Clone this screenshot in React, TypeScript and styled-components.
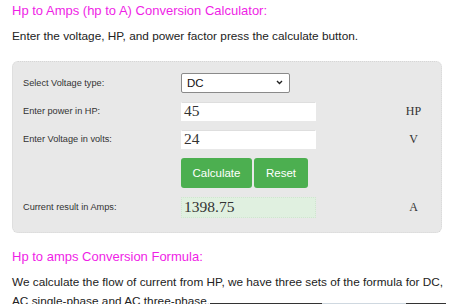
import { createGlobalStyle, styled } from 'styled-components'

const GlobalStyle = createGlobalStyle`
  html, body {
    margin: 0;
    padding: 0;
    background: #fff;
    overflow: hidden;
  }
  body {
    font-family: "Liberation Sans", Arial, sans-serif;
    color: #222;
  }
`

const Page = styled.main`
  width: 450px;
  height: 304px;
  padding: 0 12px;
  box-sizing: border-box;
  overflow: hidden;
`

const Heading = styled.h2<{ $size: number }>`
  margin: 0;
  font-weight: 400;
  color: #ef1ee6;
  font-size: ${(p) => p.$size}px;
  line-height: 1.3;
`

const Lead = styled.p`
  margin: 0;
  font-size: 11.8px;
  line-height: 20px;
  color: #222;
`

const Calculator = styled.section`
  margin: 15px 0 0;
  width: 430px;
  box-sizing: border-box;
  background: #e8e8e8;
  border: 1px dotted #d6d6d6;
  border-radius: 6px;
  padding: 11px 10px 14px;
  display: grid;
  grid-template-columns: 158px 135px 1fr;
  row-gap: 9px;
  align-items: center;
`

const Label = styled.label`
  font-size: 9.2px;
  color: #333;
`

const Unit = styled.span`
  font-family: "Liberation Serif", "Times New Roman", serif;
  font-size: 12px;
  color: #333;
  text-align: center;
  padding-left: 80px;
`

const Select = styled.div`
  width: 109px;
  height: 20px;
  box-sizing: border-box;
  background: #fff;
  border: 1px solid #8a8a8a;
  border-radius: 2px;
  display: flex;
  align-items: center;
  justify-content: space-between;
  padding: 0 6px 0 5px;
  font-size: 11.5px;
  color: #111;
`

const Field = styled.div<{ $result?: boolean }>`
  height: ${(p) => (p.$result ? 21 : 19)}px;
  box-sizing: border-box;
  background: ${(p) => (p.$result ? '#e0f0e0' : '#fff')};
  border: 1px ${(p) => (p.$result ? 'dotted #d0e4d0' : 'solid #fff')};
  border-top-color: ${(p) => (p.$result ? '#d0e4d0' : '#dedede')};
  display: flex;
  align-items: center;
  padding-left: 2px;
  font-family: "Liberation Serif", "Times New Roman", serif;
  font-size: 15.5px;
  color: #333;
`

const Buttons = styled.div`
  display: flex;
  gap: 2px;
`

const Button = styled.button<{ $w: number }>`
  width: ${(p) => p.$w}px;
  height: 30px;
  border: none;
  border-radius: 3px;
  background: #4caf50;
  color: #fff;
  font-family: "Liberation Sans", Arial, sans-serif;
  font-size: 11.5px;
  padding: 0;
`

const Text = styled.p`
  margin: 0 -9px 0 0;
  font-size: 11.8px;
  line-height: 19px;
  color: #222;
`

const Rule = styled.span<{ $w: number; $c: string }>`
  display: inline-block;
  width: ${(p) => p.$w}px;
  height: 0;
  border-top: 1px solid ${(p) => p.$c};
  vertical-align: 1px;
`

export default function App() {
  return (
    <Page>
      <GlobalStyle />
      <Heading $size={13} style={{ paddingTop: 3 }}>Hp to Amps (hp to A) Conversion Calculator:</Heading>
      <Lead style={{ marginTop: 6 }}>Enter the voltage, HP, and power factor press the calculate button.</Lead>
      <Calculator>
        <Label>Select Voltage type:</Label>
        <Select>
          <span>DC</span>
          <svg width="7" height="5" viewBox="0 0 7 5">
            <path d="M1 1l2.5 2.5L6 1" fill="none" stroke="#222" strokeWidth="1.4" />
          </svg>
        </Select>
        <span />
        <Label>Enter power in HP:</Label>
        <Field>45</Field>
        <Unit>HP</Unit>
        <Label>Enter Voltage in volts:</Label>
        <Field>24</Field>
        <Unit>V</Unit>
        <span />
        <Buttons>
          <Button $w={71}>Calculate</Button>
          <Button $w={54}>Reset</Button>
        </Buttons>
        <span />
        <Label>Current result in Amps:</Label>
        <Field $result>1398.75</Field>
        <Unit>A</Unit>
      </Calculator>
      <Heading $size={13} style={{ marginTop: 16 }}>Hp to amps Conversion Formula:</Heading>
      <Text style={{ marginTop: 7 }}>
        We calculate the flow of current from HP, we have three sets of the formula for DC, AC single-phase and AC three-phase.
        <Rule $w={112} $c="#333" />
        <Rule $w={84} $c="#cfd8e0" />
        <Rule $w={40} $c="#333" />
      </Text>
    </Page>
  )
}
